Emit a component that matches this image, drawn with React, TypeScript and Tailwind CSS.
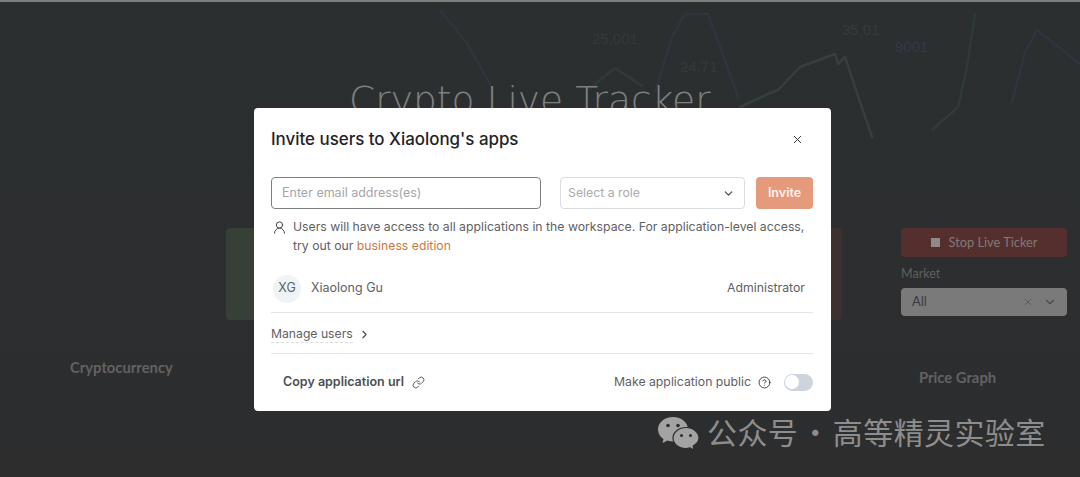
import { ChevronDown, ChevronRight, CircleHelp, Link, UserRound, X } from "lucide-react";

function ChartBackdrop() {
    return (
        <svg className="absolute inset-0" width="1080" height="300" viewBox="0 0 1080 300" fill="none">
            <g strokeWidth="2.5" strokeLinejoin="round" strokeLinecap="round">
                <path d="M440 8 L466 40 L490 82" stroke="#30343f" />
                <path d="M655 90 L672 35 L685 12 L708 12 L722 50 L738 95" stroke="#30343f" />
                <path d="M740 105 L768 92 L778 88 L800 65 L835 52 L838 62 L845 55 L860 100 L872 135" stroke="#373f3d" />
                <path d="M975 12 L966 70 L958 105 L932 128" stroke="#2f3a38" />
                <path d="M1012 100 L1025 50 L1037 28 L1080 62" stroke="#30343f" />
                <path d="M590 86 L615 66 L642 84" stroke="#303b36" />
            </g>
            <g fontFamily="'Liberation Sans', sans-serif" fontSize="15">
                <text x="592" y="42" fill="#333a3a">25,001</text>
                <text x="842" y="33" fill="#363b3b">35,01</text>
                <text x="895" y="50" fill="#343849">9001</text>
                <text x="680" y="70" fill="#333a3a">24,71</text>
            </g>
        </svg>
    );
}

function LiveTracker() {
    return (
        <div className="relative flex h-[475px] flex-col">
            <h1 className="mt-[73px] h-[50px] pl-[349px] font-['DejaVu_Sans',sans-serif] text-[37.6px] leading-[50px] font-extralight whitespace-nowrap text-[#7e8080]">
                Crypto Live Tracker
            </h1>
            <div className="mt-[103px] flex pl-[226px]">
                <div className="flex h-[92px] w-[616px]">
                    <div className="w-1/2 rounded-l bg-[#364036]" />
                    <div className="w-1/2 rounded-r bg-[#3d3130]" />
                </div>
                <div className="ml-[59px] flex w-[166px] flex-col font-['Lato',sans-serif]">
                    <div className="flex h-[29px] items-center justify-center gap-[9px] rounded bg-[#552f2d] text-[12.8px] text-[#807a79]">
                        <span className="h-[9px] w-[9px] bg-[#8f8a89]" />
                        Stop Live Ticker
                    </div>
                    <div className="mt-[9px] text-[12.5px] leading-[16px] text-[#5f5f5f]">Market</div>
                    <div className="mt-[6px] flex h-[28px] items-center rounded bg-[#7a7a7a] pr-[10px] pl-[11px] text-[13px] text-[#3a3a3a]">
                        <span className="flex-1">All</span>
                        <X size={12} className="mr-[9px] text-[#5e5e5e]" />
                        <ChevronDown size={14} className="text-[#4a4a4a]" />
                    </div>
                </div>
            </div>
            <div className="relative font-['Lato',sans-serif] text-[14.8px] font-bold text-[#626262]">
                <div className="mt-[38px] ml-[70px] h-[18px] leading-[18px]">Cryptocurrency</div>
                <div className="mt-[-8px] ml-[919px] h-[18px] leading-[18px]">Price Graph</div>
            </div>
        </div>
    );
}

function InviteDialog() {
    return (
        <div className="absolute top-[106px] left-[254px] flex h-[303px] w-[577px] flex-col rounded bg-white pr-[18px] pl-[17px] font-['Inter',sans-serif] text-[#5e6166]">
            <div className="flex h-[69px] items-start justify-between pt-[18px]">
                <h2 className="text-[16.9px] leading-[26px] font-medium text-[#1f2328]">Invite users to Xiaolong's apps</h2>
                <button className="mt-[-1px] mr-[2px] flex h-[28px] w-[28px] items-center justify-center text-[#33373c]">
                    <X size={13} strokeWidth={1.8} />
                </button>
            </div>

            <div className="flex h-[32px] text-[12.5px]">
                <div className="flex w-[270px] items-center rounded border border-[#7d7f82] pl-[10px] text-[#a4a6a9]">
                    Enter email address(es)
                </div>
                <div className="ml-[19px] flex w-[185px] items-center justify-between rounded border border-[#dadcde] pr-[9px] pl-[7px] text-[12.3px] text-[#a9abae]">
                    Select a role
                    <ChevronDown size={13} strokeWidth={2.2} className="text-[#45484c]" />
                </div>
                <button className="ml-[11px] w-[57px] rounded bg-[#e59a7c] font-semibold text-[#fdf3ee]">Invite</button>
            </div>

            <div className="mt-[8px] flex text-[12.25px] leading-[19px]">
                <UserRound size={15} strokeWidth={1.6} className="mt-[3px] mr-[6px] ml-[1px] shrink-0 text-[#45484c]" />
                <p className="whitespace-nowrap">
                    Users will have access to all applications in the workspace. For application-level access,
                    <br />
                    try out our <span className="text-[#c9793f]">business edition</span>
                </p>
            </div>

            <div className="mt-[17px] flex h-[41px] items-center border-b border-[#e3e4e6] pb-[7px] text-[12.5px]">
                <div className="ml-[2px] flex h-[28px] w-[28px] items-center justify-center rounded-full bg-[#f0f3f6] text-[#5b5f64]">
                    XG
                </div>
                <span className="ml-[10px] flex-1">Xiaolong Gu</span>
                <span className="mr-[8px] text-[12.3px]">Administrator</span>
            </div>

            <div className="flex h-[41px] items-center border-b border-[#e3e4e6] pt-[2px] text-[12.2px]">
                <span className="border-b border-dashed border-[#d8dadc] leading-[16px]">Manage users</span>
                <ChevronRight size={13} strokeWidth={2} className="ml-[5px] text-[#45484c]" />
            </div>

            <div className="flex flex-1 items-center pb-[1px] pl-[12px] text-[12.5px]">
                <span className="font-semibold text-[#4c4f54]">Copy application url</span>
                <Link size={13} strokeWidth={1.8} className="ml-[8px] text-[#55585d]" />
                <span className="ml-auto text-[12.25px]">Make application public</span>
                <CircleHelp size={13} strokeWidth={1.8} className="ml-[7px] text-[#3e4146]" />
                <div className="ml-[13px] flex h-[17px] w-[29px] items-center rounded-full bg-[#ced4de] pl-[1px]">
                    <span className="h-[14px] w-[14px] rounded-full bg-white" />
                </div>
            </div>
        </div>
    );
}

function Watermark() {
    return (
        <div className="absolute top-[410px] left-[657px] flex h-[38px] items-center font-['Noto_Sans_CJK_SC',sans-serif] text-[30px] tracking-[0.4px] whitespace-nowrap text-[#8d8d8d] [word-spacing:-5px]">
            <svg width="43" height="36" viewBox="0 0 43 36" className="mr-[7px] translate-y-[2px]">
                <path d="M16 2 C7.5 2 1 7.5 1 14.5 C1 18.5 3.2 21.8 6.5 24 L5.5 28 L10.5 25.6 C12.5 26.2 14.2 26.5 16 26.5 C24.5 26.5 31 21 31 14.5 C31 7.5 24.5 2 16 2 Z" fill="#a3a3a3" />
                <circle cx="11" cy="10.5" r="1.8" fill="#2d2d2e" />
                <circle cx="21" cy="10.5" r="1.8" fill="#2d2d2e" />
                <path d="M29 12.5 C21.5 12.5 16 17.5 16 23 C16 28.8 21.5 33.5 29 33.5 C30.5 33.5 31.8 33.2 33 32.8 L37 35 L36.2 31 C39.6 29 42 26.2 42 23 C42 17.5 36.5 12.5 29 12.5 Z" fill="#a3a3a3" stroke="#2d2d2e" strokeWidth="1.2" />
                <circle cx="24.5" cy="20.5" r="1.5" fill="#2d2d2e" />
                <circle cx="33.5" cy="20.5" r="1.5" fill="#2d2d2e" />
            </svg>
            公众号 · 高等精灵实验室
        </div>
    );
}

export default function App() {
    return (
        <div className="relative h-[477px] w-[1080px] overflow-hidden border-t-2 border-[#7f7f7f] bg-gradient-to-b from-[#2b2f30] via-[#2c2e2f] to-[#2d2d2e]">
            <ChartBackdrop />
            <LiveTracker />
            <InviteDialog />
            <Watermark />
        </div>
    );
}
